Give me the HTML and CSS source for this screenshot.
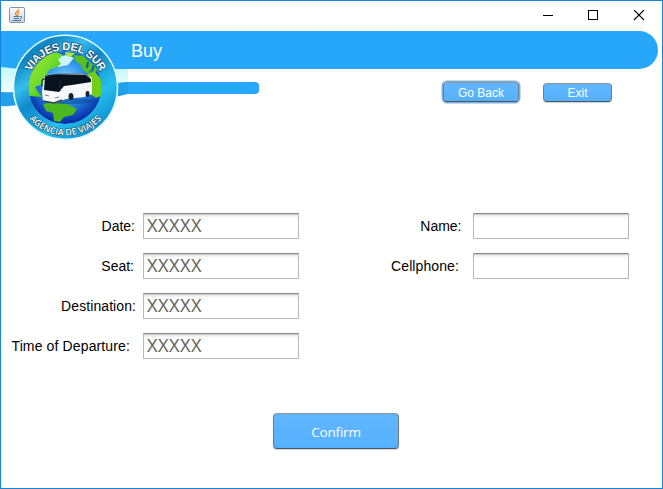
FILE: index.html
```html
<!DOCTYPE html>
<html lang="en">
<head>
<meta charset="utf-8">
<title>Buy</title>
<link rel="stylesheet" href="styles.css">
</head>
<body>
<div class="window">
  <header class="titlebar">
    <svg class="java" width="16" height="16" viewBox="0 0 16 16">
      <defs><linearGradient id="jv" x1="0" y1="0" x2="0" y2="1"><stop offset="0" stop-color="#fff"/><stop offset="1" stop-color="#c5d3e0"/></linearGradient></defs>
      <rect x=".5" y=".5" width="15" height="15" rx="1" fill="url(#jv)" stroke="#8194a7"/>
      <path d="M9.5 2C10 4 6 4.500 6.500 7L8 9M10.500 4.500C8 5.500 9.500 7 8.500 9" fill="none" stroke="#ef7d29" stroke-width="1.200"/>
      <path d="M4.500 9.500H10.500M5 11.500H10M3.500 13.500H12M11 9.500C14 9 13 11.500 11 11.500" fill="none" stroke="#4a7396"/>
    </svg>
    <svg class="controls" width="102" height="12" viewBox="0 0 102 12" fill="none" stroke="#000" shape-rendering="crispEdges">
      <path d="M0 5.500H10M45.500 .5H54.500V9.500H45.500Z"/>
      <path d="M91 0L101 10M101 0L91 10" shape-rendering="auto" stroke-width="1.100"/>
    </svg>
  </header>
  <div class="banner"><h1>Buy</h1></div>
  <div class="toolbar">
    <div class="stripe"></div>
    <button class="btn back">Go Back</button>
    <button class="btn exit">Exit</button>
  </div>
  <svg class="logo" width="127" height="111" viewBox="1 31 127 111">
    <defs>
      <linearGradient id="sky" x1="0" y1="0" x2="0" y2="1"><stop offset="0" stop-color="#c2f7fc"/><stop offset="1" stop-color="#fafeff"/></linearGradient>
      <linearGradient id="ring" x1="0" y1="0" x2=".75" y2="1"><stop offset="0" stop-color="#27b5e8"/><stop offset=".2" stop-color="#0e86c4"/><stop offset=".36" stop-color="#36bdeb"/><stop offset=".5" stop-color="#0f88cb"/><stop offset=".75" stop-color="#27bfee"/><stop offset="1" stop-color="#0789cb"/></linearGradient>
      <radialGradient id="sea" cx=".5" cy=".42" r=".58"><stop offset="0" stop-color="#8fdcfb"/><stop offset=".5" stop-color="#2a90ea"/><stop offset="1" stop-color="#0527a2"/></radialGradient>
      <linearGradient id="land" x1="0" y1="0" x2="1" y2="1"><stop offset="0" stop-color="#b3e81b"/><stop offset=".5" stop-color="#6ddc2f"/><stop offset="1" stop-color="#168a20"/></linearGradient>
      <clipPath id="globe"><circle cx="65" cy="87.500" r="36.500"/></clipPath>
      <path id="top-arc" d="M27 88.500A38.500 38.500 0 0 1 104 88.500"/>
      <path id="bottom-arc" d="M17.500 87.500A48 48 0 0 0 113.500 87.500"/>
    </defs>
    <path d="M1 67Q16 69 29 69H128V82Q109 91 77 94H1Z" fill="url(#sky)"/>
    <path d="M1 92Q13 93 28 91V103Q14 107 1 106Z" fill="#229fe9"/>
    <path d="M108 86Q118 82 128 82V94Q117 96 108 100Z" fill="#229fe9"/>
    <circle cx="65.500" cy="87.300" r="52" fill="url(#ring)" stroke="#ddfaff" stroke-width="1.600"/>
    <g clip-path="url(#globe)">
      <circle cx="65" cy="87.500" r="36.500" fill="url(#sea)"/>
      <path d="M56 57L67 55 74 58 68 65 58 67Z" fill="#c9f4fb"/>
      <path d="M27 96L28 74Q38 52 56 52L63 55 58 60 61 64 55 68 50 69 46 75 43 84 35 87 39 93 43 97Z" fill="url(#land)"/>
      <path d="M74 55L83 56 98 69 95 73 89 70 90 75 83 70 80 64 75 61Z" fill="#58bf1c"/>
      <path d="M65 52L75 53 71 57 66 56Z" fill="#a1e642"/>
      <path d="M83 77L94 71 103 81V95L96 98 89 93Z" fill="#6fd018"/>
      <path d="M43 104L54 102 67 104 77 109 73 115 64 117 60 122 54 121 53 113 46 111Z" fill="#4bb81f"/>
      <path d="M88 62L87 68M94 65L92 71" stroke="#1654b2" stroke-width="2"/>
    </g>
    <ellipse cx="69" cy="101" rx="25" ry="3" fill="#06428d" opacity=".5"/>
    <path d="M44 77Q48 74 56 74H82Q90 75 92 78V94L84 97 66 99 55 103 43 101 42 92Z" fill="#f6f8fb"/>
    <path d="M45 76Q51 74 59 74L86 75 91 79V82L72 85 64 86 59 92 44 90Z" fill="#07131d"/>
    <path d="M57 74H84L90 77" fill="none" stroke="#65727c"/>
    <path d="M45 79Q41 78 42 86M60 80V91" fill="none" stroke="#172a39" stroke-width="1.200"/>
    <path d="M43 101L54 103 62 100" fill="none" stroke="#394653" stroke-width="1.500"/>
    <ellipse cx="71" cy="96.500" rx="2.500" ry="3.500" fill="#172330"/><ellipse cx="87.500" cy="94" rx="2" ry="3" fill="#172330"/>
    <path d="M45 95L49 96M55 98L59 97" stroke="#70818e"/>
    <text class="logo-top"><textPath href="#top-arc" startOffset="50%" text-anchor="middle" textLength="86">VIAJES DEL SUR</textPath></text>
    <text class="logo-bottom"><textPath href="#bottom-arc" startOffset="50%" text-anchor="middle" textLength="82">AGENCIA DE VIAJES</textPath></text>
  </svg>
  <main class="form">
    <div class="fields">
      <label class="l-date" for="date">Date:</label><input id="date" value="XXXXX" readonly>
      <label class="l-seat" for="seat">Seat:</label><input id="seat" value="XXXXX" readonly>
      <label class="l-dest" for="dest">Destination:</label><input id="dest" value="XXXXX" readonly>
      <label class="l-time" for="time">Time of Departure:</label><input id="time" value="XXXXX" readonly>
    </div>
    <div class="fields contact">
      <label class="l-name" for="name">Name:</label><input id="name">
      <label class="l-phone" for="phone">Cellphone:</label><input id="phone">
    </div>
  </main>
  <footer><button class="btn confirm">Confirm</button></footer>
</div>
</body>
</html>
```
FILE: styles.css
```css
* { box-sizing: border-box; }
body { margin: 0; font-family: "Liberation Sans", sans-serif; background: #fff; }
.window { position: relative; width: 663px; height: 489px; border: 1px solid #1883d7; overflow: hidden; }
.titlebar { display: flex; height: 30px; justify-content: space-between; padding: 6px 17px 0 8px; }
.controls { margin-top: 3px; }
.banner { width: 657px; height: 38px; padding: 9px 0 0 130px; background: #26a7f9; border-radius: 0 20px 20px 0; }
h1 { margin: 0; color: #fff; font-size: 18px; line-height: 23px; font-weight: 400; }
.toolbar { display: flex; height: 144px; padding-top: 13px; align-items: flex-start; }
.stripe { width: 258px; height: 12px; background: #26a7f9; border-radius: 0 4px 4px 0; }
.btn { display: block; padding: 0; color: #fff; font: 12px "Liberation Sans", sans-serif; border: 1px solid; border-color: #8d969e #6b7f91 #4b5762; border-radius: 4px; background: linear-gradient(#62b6ff, #55b1ff); box-shadow: 0 1px 1px #cdd2d6; }
.toolbar .btn { height: 19px; padding-top: 2px; line-height: 15px; }
.back { width: 76px; margin-left: 184px; }
.toolbar .back { height: 20px; box-shadow: 0 0 0 1.5px #82b0d9; }
.toolbar .exit { width: 69px; margin-left: 24px; margin-top: 1px; }
.logo { position: absolute; left: 0; top: 30px; }
.logo-top { font: bold 11px "Liberation Sans", sans-serif; fill: #fff; stroke: #17496e; stroke-width: 1.4px; paint-order: stroke; }
.logo-bottom { font: 600 9px "Open Sans", sans-serif; fill: #fff; stroke: #174963; stroke-width: 1px; paint-order: stroke; }
.form { display: flex; height: 200px; align-items: flex-start; }
.fields { display: grid; grid-template-columns: 142px 156px; row-gap: 14px; }
.contact { grid-template-columns: 174px 156px; }
label { text-align: right; font-size: 14px; line-height: 26px; white-space: nowrap; }
.l-date { padding-right: 8px; }
.l-seat { padding-right: 9px; }
.l-dest { padding-right: 7px; letter-spacing: .08px; }
.l-time { padding-right: 13px; letter-spacing: .13px; }
.l-name { padding-right: 11.5px; }
.l-phone { padding-right: 14px; letter-spacing: .1px; }
input { width: 156px; height: 26px; padding: 0 0 2px 3px; margin: 0; border: 1px solid #b8b8b8; border-top-color: #8b8b8b; border-radius: 0; outline: 0; background: linear-gradient(#b5b5b5 0, #e8e8e8 1px, #fff 4px); color: #666; font: 18px "Noto Sans", sans-serif; letter-spacing: .45px; }
footer { display: flex; padding-left: 272px; }
.confirm { width: 126px; height: 36px; padding-top: 1px; font: 13.5px "Open Sans", sans-serif; letter-spacing: -.2px; }
```
